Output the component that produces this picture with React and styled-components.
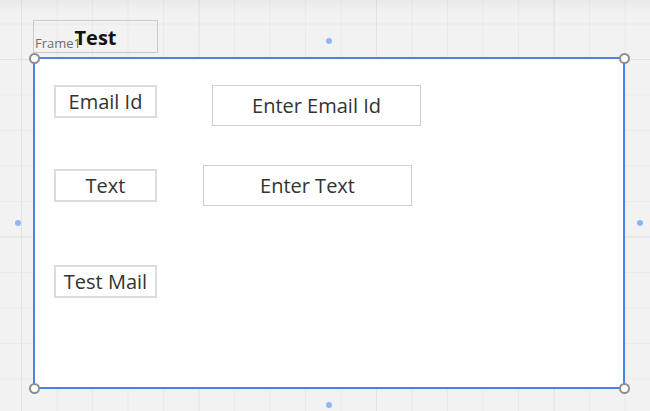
import React from 'react';
import styled, { createGlobalStyle } from 'styled-components';

const GlobalStyle = createGlobalStyle`
    html,
    body {
        margin: 0;
        padding: 0;
    }

    body {
        font-family: 'Open Sans', 'Liberation Sans', sans-serif;
    }

    * {
        box-sizing: border-box;
    }
`;

// designer canvas with the snapping grid
const Canvas = styled.div`
    width: 650px;
    height: 411px;
    overflow: hidden;
    display: flex;
    flex-direction: column;
    align-items: flex-start;
    padding: 20px 0 0 33px;
    background-color: #f2f2f2;
    background-image:
        linear-gradient(to bottom, rgba(0, 0, 0, 0.035), rgba(0, 0, 0, 0) 14px),
        linear-gradient(to right, #e3e3e3 1px, transparent 1px),
        linear-gradient(to bottom, #e3e3e3 1px, transparent 1px),
        linear-gradient(to right, #eaeaea 1px, transparent 1px),
        linear-gradient(to bottom, #eaeaea 1px, transparent 1px);
    background-size: 100% 100%, 177.5px 177.5px, 177.5px 177.5px, 35.5px 35.5px, 35.5px 35.5px;
    background-position: 0 0, 21px 59px, 21px 59px, 21px 59px, 21px 59px;
    background-repeat: no-repeat, repeat, repeat, repeat, repeat;
`;

const TitleBox = styled.div`
    position: relative;
    width: 125px;
    height: 33px;
    border: 1px solid #c9c9c9;
    display: flex;
    align-items: center;
    justify-content: center;
    padding-top: 2px;
`;

const NameTag = styled.span`
    position: absolute;
    left: 1px;
    bottom: 1px;
    font-size: 13px;
    font-weight: 400;
    line-height: 16px;
    color: #6e6e6e;
`;

const TitleText = styled.span`
    position: relative;
    z-index: 1;
    font-size: 20px;
    font-weight: 700;
    color: #141414;
`;

const Frame = styled.div`
    position: relative;
    margin-top: 4px;
    width: 592px;
    height: 332px;
    background: #fff;
    border: 2px solid #4a82e6;
    display: flex;
    flex-direction: column;
    padding: 26px 0 0 19px;
`;

const Row = styled.div`
    display: flex;
    align-items: ${(p) => p.$align || 'flex-start'};
    gap: ${(p) => p.$gap || 0}px;
    margin-top: ${(p) => p.$top || 0}px;
`;

const Label = styled.div`
    width: 103px;
    height: 33px;
    border: 2px solid #dcdcdc;
    display: flex;
    align-items: center;
    justify-content: center;
    font-size: 20px;
    color: #333;
    white-space: nowrap;
`;

const Input = styled.div`
    width: 209px;
    height: 41px;
    border: 1px solid #cfcfcf;
    display: flex;
    align-items: center;
    justify-content: center;
    font-size: 20px;
    color: #333;
    white-space: nowrap;
`;

// corner resize handles
const Handle = styled.span`
    position: absolute;
    width: 11px;
    height: 11px;
    border-radius: 50%;
    background: #fff;
    border: 2px solid #8e8e8e;
    left: ${(p) => (p.$right ? 'auto' : '-6.5px')};
    right: ${(p) => (p.$right ? '-6.5px' : 'auto')};
    top: ${(p) => (p.$bottom ? 'auto' : '-6.5px')};
    bottom: ${(p) => (p.$bottom ? '-6.5px' : 'auto')};
`;

// small blue dots on each side, just outside the frame
const SideDot = styled.span`
    position: absolute;
    width: 6px;
    height: 6px;
    border-radius: 50%;
    background: #91b6f6;
    margin: -3px 0 0 -3px;
    left: ${(p) => p.$x}px;
    top: ${(p) => p.$y}px;
`;

export default function App() {
    return (
        <>
            <GlobalStyle />
            <Canvas>
                <TitleBox>
                    <NameTag>Frame1</NameTag>
                    <TitleText>Test</TitleText>
                </TitleBox>

                <Frame>
                    <Row $gap={55}>
                        <Label>Email Id</Label>
                        <Input>Enter Email Id</Input>
                    </Row>
                    <Row $gap={46} $top={39} $align="center">
                        <Label>Text</Label>
                        <Input>Enter Text</Input>
                    </Row>
                    <Row $top={59}>
                        <Label>Test Mail</Label>
                    </Row>

                    <Handle />
                    <Handle $right />
                    <Handle $bottom />
                    <Handle $right $bottom />

                    <SideDot $x={294} $y={-18} />
                    <SideDot $x={294} $y={346} />
                    <SideDot $x={-17} $y={164} />
                    <SideDot $x={605} $y={164} />
                </Frame>
            </Canvas>
        </>
    );
}
